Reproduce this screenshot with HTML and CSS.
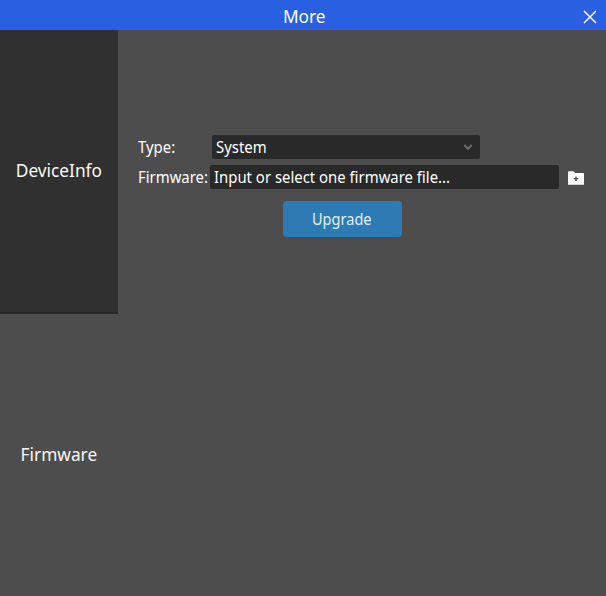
FILE: index.html
```html
<!DOCTYPE html>
<html lang="en">
<head>
<meta charset="utf-8">
<title>More</title>
<link rel="stylesheet" href="styles.css">
</head>
<body>
<div class="window">
  <header class="titlebar">
    <h1 class="title"><span class="wide">More</span></h1>
    <button class="close" aria-label="Close"><svg width="14" height="14" viewBox="0 0 14 14"><path d="M1 1L13 13M13 1L1 13" fill="none" stroke="#fff" stroke-width="1.5"/></svg></button>
  </header>
  <div class="body">
    <nav class="tabs">
      <a class="tab tab-raised"><span class="wide">DeviceInfo</span></a>
      <a class="tab"><span class="wide">Firmware</span></a>
    </nav>
    <main class="panel">
      <div class="row">
        <span class="label label-type"><span class="narrow">Type:</span></span>
        <div class="field select"><span class="narrow">System</span><svg width="10" height="7" viewBox="0 0 10 7"><path d="M1.3 1L5 4.8L8.7 1" fill="none" stroke="#6c6c6c" stroke-width="2"/></svg></div>
      </div>
      <div class="row">
        <span class="label"><span class="narrow">Firmware:</span></span>
        <div class="field file"><span class="narrow">Input or select one firmware file...</span></div>
        <svg class="folder" width="16" height="14" viewBox="0 0 16 14"><path d="M0 1Q0 .3 .7 .3H5.5L7.2 2H15.3Q16 2 16 2.7V13.7H0Z" fill="#fff"/><path d="M8 5.5V10M5.7 7.7H10.3" stroke="#4d4d4d" stroke-width="1.3"/></svg>
      </div>
      <button class="upgrade"><span class="narrow centered">Upgrade</span></button>
    </main>
  </div>
</div>
</body>
</html>
```
FILE: styles.css
```css
* { box-sizing: border-box; }
body { margin: 0; background: #4d4d4d; color: #fff; font-family: "Noto Sans", sans-serif; font-size: 16px; }
.window { height: 596px; display: flex; flex-direction: column; overflow: hidden; }
.wide { display: inline-block; transform: scaleX(.96); }
.narrow { display: inline-block; transform: scaleX(.931); transform-origin: left center; }
.centered { transform: scaleX(.91); transform-origin: center; }
.titlebar { height: 30px; flex: none; background: #2860e1; display: grid; grid-template-columns: 34px 1fr 32px; align-items: center; }
.title { grid-column: 2; margin: 0; padding-top: 1px; font-size: 18px; font-weight: 400; line-height: 26px; text-align: center; }
.close { border: 0; padding: 4px 0 0; background: none; display: flex; justify-content: center; }
.body { flex: 1; display: flex; }
.tabs { width: 118px; display: flex; flex-direction: column; }
.tab { height: 284px; padding: 0 1px 4px 0; display: flex; align-items: center; justify-content: center; font-size: 18px; color: #f8f8f8; }
.tab-raised { padding-bottom: 3px; background: #303030; border-bottom: 2px solid #282828; }
.panel { flex: 1; padding: 105px 0 0 20px; }
.row { height: 24px; display: flex; align-items: center; margin-bottom: 6px; }
.label { width: 72px; flex: none; white-space: nowrap; }
.label-type { width: 74px; }
.field { height: 24px; line-height: 24px; padding: 0 4px; background: #292929; border-radius: 2px; white-space: nowrap; }
.select { width: 268px; padding-right: 7px; display: flex; align-items: center; justify-content: space-between; }
.file { width: 349px; }
.folder { margin: 2px 0 0 9px; }
.upgrade { display: block; margin: 12px 0 0 145px; width: 119px; height: 36px; padding: 0 2px 0 0; border: 0; border-radius: 4px; background: #2d7bb2; color: #e3eff7; font: inherit; }
```
